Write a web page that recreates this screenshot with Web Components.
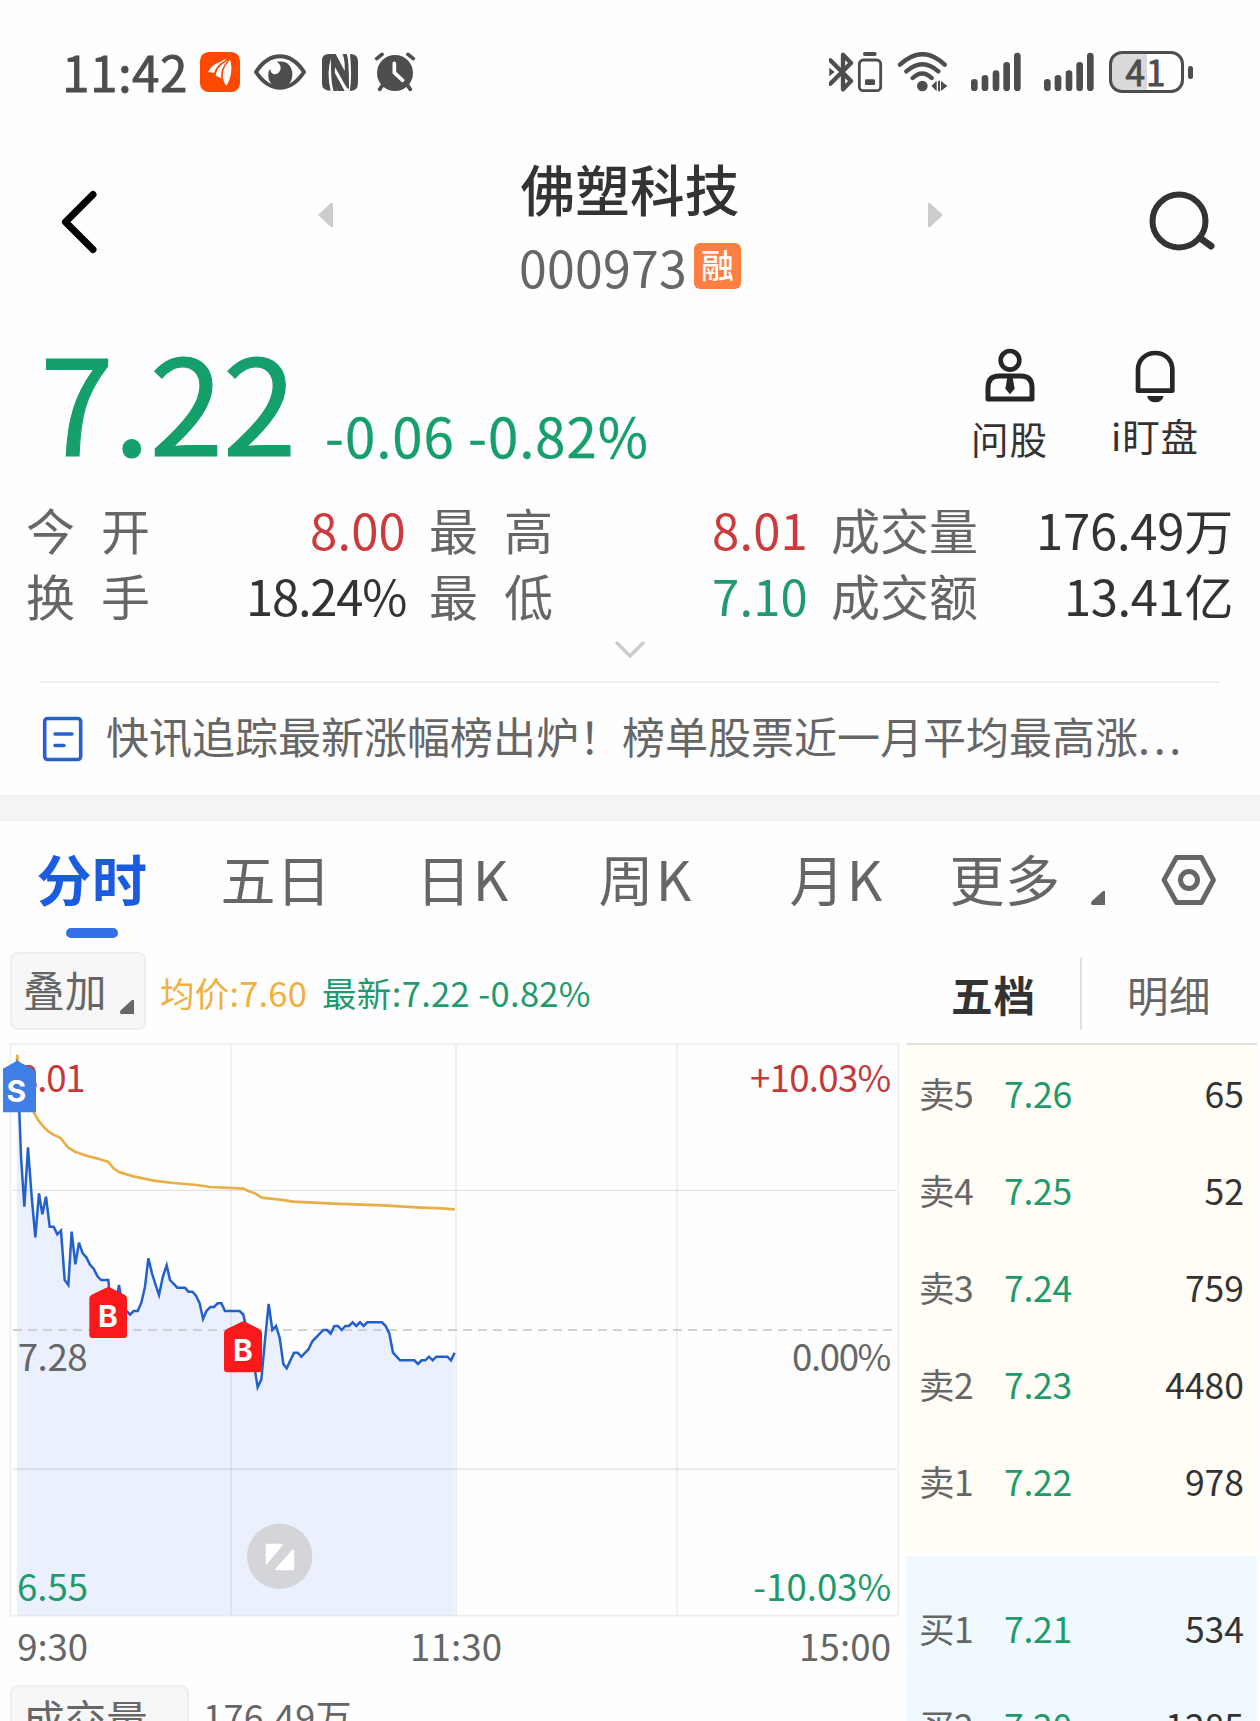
<!DOCTYPE html>
<html lang="zh-CN">
<head>
<meta charset="utf-8">
<meta name="viewport" content="width=1260">
<title>佛塑科技 000973</title>
<style>
  html, body {
    margin: 0;
    background: #fefefe;
  }
  body {
    width: 1260px;
    height: 1721px;
    overflow: hidden;
    font-family: "Noto Sans CJK SC", "Noto Sans", sans-serif;
    color: #333;
  }
</style>
</head>
<body>
<stock-page></stock-page>

<script>
const define = (name, html, setup) => {
  const template = document.createElement('template');
  template.innerHTML = html;
  customElements.define(name, class extends HTMLElement {
    constructor() {
      super();
      this.attachShadow({ mode: 'open' });
      this.shadowRoot.appendChild(template.content.cloneNode(true));
    }

    connectedCallback() {
      if (setup) setup(this, this.shadowRoot);
    }
  });
};

define('status-bar', `
  <style>
    :host { display: flex; align-items: center; height: 144px; box-sizing: border-box; padding: 0 67px 0 62px; color: #4d4d4d; }
    .time { font-size: 49.5px; -webkit-text-stroke: .8px #4d4d4d; margin-right: 12px; padding-bottom: 3px; }
    svg { display: block; flex: none; }
    .space { flex: 1; }
    .battery { display: flex; align-items: center; }
    .cell { width: 75px; height: 42px; box-sizing: border-box; border: 3px solid #4d4d4d; border-radius: 13px; display: flex; align-items: center; justify-content: center; background: linear-gradient(90deg, #d9d9d9 35px, transparent 35px); }
    .cell fit-text { font-size: 35px; -webkit-text-stroke: .9px #4d4d4d; padding: 0 1px 3px 0; }
    .nub { width: 5px; height: 13px; border-radius: 3px; background: #4d4d4d; margin-left: 4px; }
  </style>
  <fit-text class="time" w="126">11:42</fit-text>
  <svg width="40" height="40" viewBox="0 0 120 120">
    <rect width="120" height="120" rx="26" fill="#ff4800"/>
    <path fill="#fff" d="M24 61C29 46 42 37 59 30L74 22C78 20 77 26 73 29C60 36 47 46 43 64C36 61 30 60 24 61Z"/>
    <path fill="#fff" d="M47 72C49 52 59 40 76 29C82 23 83 27 80 32C70 45 62 61 66 82C60 76 54 72 47 72Z"/>
    <path fill="#fff" d="M69 82C64 60 72 43 83 31C88 24 91 22 92 29C97 50 94 79 79 101C75 98 73 91 69 82Z"/>
    <path d="M44 66C48 48 60 36 78 26M67 84C62 62 70 43 84 28" fill="none" stroke="#ff4800" stroke-width="4.500"/>
  </svg>
  <svg width="52" height="38" viewBox="0 0 156 114" style="margin-left:14px">
    <path d="M6 57C47-6 109-6 150 57C109 120 47 120 6 57Z" fill="none" stroke="#4d4d4d" stroke-width="12" stroke-linejoin="round"/>
    <path d="M68 27C99 20 116 40 115 66C114 89 99 105 79 105C58 105 41 88 43 64C43 57 45 52 49 48C49 64 67 69 75 58C84 45 80 33 68 27Z" fill="#4d4d4d"/>
  </svg>
  <svg width="36" height="37" viewBox="0 0 108 111" style="margin-left:16px">
    <path fill="#4d4d4d" d="M20 0H41L68 51Q70 23 62 0H74Q81 15 81 105Q75 104 71 96L39 39Q37 78 46 111H35Q26 88 27 13Q13 57 26 110Q0 109 0 89V20Q0 0 20 0ZM84 0Q108 0 108 22V87Q108 111 83 111Q91 70 84 0ZM39 58L68 111H47Q38 89 39 58Z"/>
  </svg>
  <svg width="42" height="40" viewBox="0 0 126 120" style="margin-left:16px">
    <path d="M8 20L24 7M102 7L118 20M27 98L17 112M99 98L109 112" stroke="#4d4d4d" stroke-width="11" stroke-linecap="round"/>
    <circle cx="63" cy="63" r="54" fill="#4d4d4d"/>
    <path d="M61 34V62L86 85" fill="none" stroke="#fefefe" stroke-width="11" stroke-linecap="round" stroke-linejoin="round"/>
  </svg>
  <span class="space"></span>
  <svg width="54" height="40" viewBox="0 0 162 120">
    <path d="M4 25L66 87L42 112V8L66 33L4 95" fill="none" stroke="#4d4d4d" stroke-width="13" stroke-linejoin="round" stroke-linecap="round"/>
    <path d="M1 47L17 60L1 73Z" fill="#4d4d4d"/>
    <rect x="91" y="24" width="64" height="92" rx="12" fill="none" stroke="#4d4d4d" stroke-width="8.500"/>
    <rect x="102" y="0" width="41" height="12" rx="6" fill="#4d4d4d"/>
    <rect x="108" y="82" width="30" height="17" rx="4" fill="#4d4d4d"/>
  </svg>
  <svg width="51" height="40" viewBox="0 0 153 120" style="margin-left:14px">
    <path d="M9 38Q77-25 143 38M28 58Q76 15 124 58M47 78Q76 51 104 78" fill="none" stroke="#4d4d4d" stroke-width="13" stroke-linecap="round"/>
    <circle cx="76" cy="102" r="16" fill="#4d4d4d"/>
    <path d="M103 102L119 86V118ZM123 86H129V118H123ZM132 87L151 102L132 117Z" fill="#4d4d4d"/>
  </svg>
  <svg width="50" height="40" viewBox="0 0 150 120" style="margin-left:23px">
    <path d="M10 91V107M42 79V107M75 65V107M107 40V107M139 12V107" stroke="#4d4d4d" stroke-width="20" stroke-linecap="round"/>
  </svg>
  <svg width="50" height="40" viewBox="0 0 150 120" style="margin-left:23px">
    <path d="M10 91V107M42 79V107M75 65V107M107 40V107M139 12V107" stroke="#4d4d4d" stroke-width="20" stroke-linecap="round"/>
  </svg>
  <div class="battery" style="margin-left:15px"><div class="cell"><fit-text w="41">41</fit-text></div><div class="nub"></div></div>
`);

define('stock-header', `
  <style>
    :host { display: flex; height: 166px; padding: 0 44px 0 58px; }
    svg { display: block; flex: none; }
    .title { width: 222px; display: flex; flex-direction: column; align-items: center; padding-top: 17px; }
    .name { font-size: 54.5px; font-weight: 500; }
    .code { display: flex; align-items: center; margin-top: 25px; color: #666; font-size: 50px; height: 50px; }
    .tag { width: 47px; height: 46px; margin-left: 7px; border-radius: 6px; background: #ff7f40; color: #fff; display: flex; align-items: center; justify-content: center; font-size: 33px; font-weight: 500; line-height: 1; }
    .tag span { padding-bottom: 2px; }
  </style>
  <svg width="40" height="70" viewBox="0 0 40 70" style="margin-top:43px"><path d="M35 7.500L7.500 35L35 62.500" fill="none" stroke="#000" stroke-width="7" stroke-linecap="round" stroke-linejoin="round"/></svg>
  <svg width="18" height="28" viewBox="0 0 18 28" style="margin:57px 185px 0 218px"><path d="M2 14L15 2Q17 1 17 3V25Q17 27 15 26Z" fill="#ccc"/></svg>
  <div class="title">
    <fit-text class="name" w="219">佛塑科技</fit-text>
    <div class="code"><fit-text w="168">000973</fit-text><div class="tag"><span>融</span></div></div>
  </div>
  <svg width="18" height="28" viewBox="0 0 18 28" style="margin:57px 0 0 186px"><path d="M16 14L3 2Q1 1 1 3V25Q1 27 3 26Z" fill="#ccc"/></svg>
  <svg width="72" height="70" viewBox="0 0 72 70" style="margin:42px 0 0 auto"><circle cx="35" cy="35" r="26.500" fill="none" stroke="#333" stroke-width="6"/><path d="M56 52L67 60" stroke="#333" stroke-width="7" stroke-linecap="round"/></svg>
`);

define('quote-action', `
  <style>
    :host { display: flex; flex-direction: column; align-items: center; color: #333; font-size: 37.5px; }
  </style>
  <slot></slot>
`);

define('quote-summary', `
  <style>
    :host { display: flex; height: 187px; color: #159f6a; }
    .price { font-size: 133px; -webkit-text-stroke: 1.2px #159f6a; margin: 22px 0 0 40px; }
    .change { font-size: 54.5px; margin: 98px 0 0 29px; -webkit-text-stroke: .3px #159f6a; }
    .space { flex: 1; }
    svg { display: block; }
  </style>
  <fit-text class="price" w="256">7.22</fit-text>
  <fit-text class="change" w="324">-0.06 -0.82%</fit-text>
  <span class="space"></span>
  <quote-action style="margin-top:38px">
    <svg width="52" height="56" viewBox="0 0 156 168">
      <circle cx="78" cy="37" r="28" fill="none" stroke="#262626" stroke-width="14"/>
      <path d="M12 153V119Q12 84 45 84H111Q144 84 144 119V153Z" fill="none" stroke="#262626" stroke-width="15" stroke-linejoin="round"/>
      <path d="M70 88H86L92 122L78 139L64 122Z" fill="#262626"/>
    </svg>
    <fit-text w="77" style="margin-top:15px">问股</fit-text>
  </quote-action>
  <quote-action style="margin:38px 61px 0 63px">
    <svg width="52" height="56" viewBox="0 0 156 168">
      <path d="M27 128V65C27 35 50 15 79 15S130 35 130 65V128Z" fill="none" stroke="#262626" stroke-width="14" stroke-linejoin="round"/>
      <path d="M54 144H104Q99 163 79 163T54 144Z" fill="#262626"/>
    </svg>
    <fit-text w="88" style="margin-top:12px">i盯盘</fit-text>
  </quote-action>
`);

define('quote-stats', `
  <style>
    :host { display: grid; grid-template-columns: 124px 279px 124px 278px 147px 256px; grid-auto-rows: 66px; align-items: center; height: 143px; padding: 0 26px; font-size: 49px; }
    .k { color: #666; display: flex; justify-content: space-between; line-height: 1; padding-bottom: 4px; }
    .v { justify-self: end; margin-right: 23px; padding-bottom: 4px; }
    .v.end { margin-right: 1px; }
    .red { color: #cc3a3d; }
    .green { color: #1f9a6c; }
  </style>
  <div class="k"><span>今</span><span>开</span></div><fit-text class="v red" w="96">8.00</fit-text>
  <div class="k"><span>最</span><span>高</span></div><fit-text class="v red" w="96">8.01</fit-text>
  <div class="k"><span>成</span><span>交</span><span>量</span></div><fit-text class="v end" w="197">176.49万</fit-text>
  <div class="k"><span>换</span><span>手</span></div><fit-text class="v" w="160">18.24%</fit-text>
  <div class="k"><span>最</span><span>低</span></div><fit-text class="v green" w="96">7.10</fit-text>
  <div class="k"><span>成</span><span>交</span><span>额</span></div><fit-text class="v end" w="169">13.41亿</fit-text>
`);

define('news-bar', `
  <style>
    :host { display: block; height: 155px; }
    .more { display: flex; justify-content: center; height: 41px; }
    svg { display: block; flex: none; }
    .line { height: 2px; margin: 0 40px; background: #f0f0f0; }
    .news { display: flex; align-items: center; padding: 0 0 1px 42px; height: 111px; color: #666; font-size: 43px; }
    fit-text { padding-bottom: 6px; }
  </style>
  <div class="more"><svg width="32" height="18" viewBox="0 0 32 18" style="margin-top:1px"><path d="M3 2L16 15L29 2" fill="none" stroke="#ccc" stroke-width="3.4" stroke-linecap="round"/></svg></div>
  <div class="line"></div>
  <div class="news">
    <svg width="42" height="46" viewBox="0 0 42 46"><rect x="2.700" y="2.500" width="36" height="41" rx="3" fill="none" stroke="#2860cc" stroke-width="3.600"/><path d="M13 18H30M13 29.500H22" stroke="#2860cc" stroke-width="3.400" stroke-linecap="round"/></svg>
    <fit-text w="1032" style="margin-left:22px">快讯追踪最新涨幅榜出炉！榜单股票近一月平均最高涨</fit-text>
    <fit-text w="47">...</fit-text>
  </div>
`);

define('period-tabs', `
  <style>
    :host { display: grid; grid-template-columns: 184px 184px 190px 176px 206px 130px 1fr 142px; height: 131px; color: #666; font-size: 55px; }
    div { display: flex; flex-direction: column; align-items: center; padding-top: 29px; }
    .on { color: #1a5ce0; font-weight: 700; }
    .on::after { content: ""; width: 52px; height: 10px; border-radius: 5px; background: #3370e6; margin-top: 23px; }
    svg { display: block; }
  </style>
  <div class="on"><fit-text w="111">分时</fit-text></div>
  <div><fit-text w="111">五日</fit-text></div>
  <div><fit-text w="94">日K</fit-text></div>
  <div><fit-text w="95">周K</fit-text></div>
  <div><fit-text w="95">月K</fit-text></div>
  <div><fit-text w="111">更多</fit-text></div>
  <div style="align-items:flex-start;padding:70px 0 0 21px"><svg width="14" height="14"><path d="M0 13Q0 11 1 10L12 0H14V14H1Z" fill="#666"/></svg></div>
  <div style="padding-top:33px"><svg width="56" height="52" viewBox="0 0 56 52"><path d="M15.500 3.500H40.500L52.500 26L40.500 48.500H15.500L3 26Z" fill="none" stroke="#666" stroke-width="4.800" stroke-linejoin="round"/><circle cx="28" cy="26" r="8.500" fill="none" stroke="#666" stroke-width="5"/></svg></div>
`);

define('tool-chip', `
  <style>
    :host { display: block; position: relative; box-sizing: border-box; height: 78px; border: 2px solid #eee; border-radius: 8px; background: #f7f7f7; color: #666; font-size: 41.5px; padding: 15px 0 0 11px; flex: none; }
    svg { position: absolute; right: 10px; bottom: 14px; }
    :host([plain]) { padding-top: 11px; }
    :host([plain]) svg { display: none; }
  </style>
  <slot></slot>
  <svg width="14" height="14"><path d="M0 13Q0 11 1 10L12 0H14V14H1Z" fill="#666"/></svg>
`);

define('chart-toolbar', `
  <style>
    :host { display: flex; height: 91px; font-size: 34.5px; }
    .avg { color: #f0b040; margin: 23px 0 0 14px; }
    .last { color: #1f9a6c; margin: 23px 0 0 15px; }
    .side { margin-left: auto; display: flex; width: 354px; font-size: 41.5px; color: #666; }
    .side > * { flex: none; }
    .side b { color: #333; }
    .bar { width: 2px; height: 72px; margin-top: 6px; background: #e0e0e0; }
  </style>
  <tool-chip style="width:136px;margin-left:10px"><fit-text w="84">叠加</fit-text></tool-chip>
  <fit-text class="avg" w="147">均价:7.60</fit-text>
  <fit-text class="last" w="269">最新:7.22 -0.82%</fit-text>
  <div class="side">
    <b><fit-text w="85" style="margin:22px 0 0 45px">五档</fit-text></b>
    <div class="bar" style="margin-left:44px"></div>
    <fit-text w="84" style="margin:22px 0 0 45px">明细</fit-text>
  </div>
`);

// plot coordinates: 3 units per css pixel, origin at the top left of the host
const PRICE = '51,55 58,215 63,350 73,500 84,322 95,470 106,592 117,460 127,523 138,470 149,560 161,560 172,583 183,572 194,720 205,735 215,575 226,673 237,608 248,640 259,652 270,674 281,686 292,708 303,720 325,720 328,750 346,800 357,735 368,800 380,813 390,824 401,813 413,813 424,788 435,740 445,655 456,700 467,735 477,765 489,708 500,676 510,720 532,743 555,743 565,755 577,755 588,767 599,790 609,837 620,812 631,801 642,801 653,790 664,790 675,813 719,813 730,824 736,850 760,960 773,1042 784,1018 795,900 806,792 817,870 828,858 839,893 850,972 860,985 882,938 893,938 904,950 926,927 937,904 970,870 981,870 992,881 1003,858 1014,858 1025,870 1036,858 1047,858 1058,847 1069,858 1080,847 1091,858 1102,847 1146,847 1157,858 1168,881 1179,938 1200,961 1243,961 1254,972 1265,961 1276,961 1287,950 1298,961 1309,950 1342,950 1353,961 1364,938';
const AVERAGE = '51,44 58,90 80,170 104,222 118,245 130,260 145,274 160,284 182,294 192,307 205,323 225,335 262,348 290,355 325,366 340,384 357,396 400,409 460,422 520,429 590,435 630,441 730,446 745,453 765,460 785,473 840,479 880,485 1000,491 1150,496 1250,502 1325,505 1364,508';

define('intraday-chart', `
  <style>
    :host { display: block; width: 906px; height: 645px; }
    svg { display: block; font-size: 110px; }
    .mark { font-family: Inter, "Noto Sans CJK SC", sans-serif; font-size: 90px; font-weight: 700; text-anchor: middle; fill: #fff; }
  </style>
  <svg width="906" height="645" viewBox="0 0 2718 1935">
    <polygon points="51,1726 ${PRICE} 1364,1726" fill="#eaf0fe"/>
    <g fill="none" stroke="#000" stroke-opacity=".065" stroke-width="5">
      <rect x="31" y="12" width="2664" height="1715"/>
      <path d="M693 14V1726M1368 14V1726M2031 14V1726"/>
      <path d="M39 451H2690M39 1287H2690" stroke-width="4" stroke-opacity=".1"/>
    </g>
    <path d="M39 870H2690" stroke="#c4c4c8" stroke-width="5" stroke-dasharray="27 18"/>
    <g fill="#c23a3c">
      <text x="54" y="155" textLength="203">8.01</text>
      <text x="2250" y="155" textLength="424">+10.03%</text>
    </g>
    <g fill="#666">
      <text x="53" y="992" textLength="210">7.28</text>
      <text x="2376" y="992" textLength="298">0.00%</text>
      <text x="52" y="1863" textLength="212">9:30</text>
      <text x="1230" y="1863" textLength="276">11:30</text>
      <text x="2397" y="1863" textLength="276">15:00</text>
    </g>
    <g fill="#1f9a6c">
      <text x="51" y="1682" textLength="213">6.55</text>
      <text x="2260" y="1682" textLength="414">-10.03%</text>
    </g>
    <polyline points="${PRICE}" fill="none" stroke="#2460cc" stroke-width="7.500" stroke-linejoin="miter"/>
    <polyline points="${AVERAGE}" fill="none" stroke="#eaae48" stroke-width="8"/>
    <path d="M51 62L98 87Q108 92 108 100V217H9V86Z" fill="#3f7ee5"/>
    <path d="M325 740L371 763Q381 768 381 776V884Q381 894 371 894H278Q268 894 268 884V776Q268 768 278 763Z" fill="#fa1a1c"/>
    <path d="M730 843L776 866Q786 871 786 879V987Q786 997 776 997H682Q672 997 672 987V879Q672 871 682 866Z" fill="#fa1a1c"/>
    <text class="mark" x="49" y="185">S</text>
    <text class="mark" x="324" y="860">B</text>
    <text class="mark" x="729" y="963">B</text>
    <circle cx="839" cy="1549" r="98" fill="#d3d5d9"/>
    <path d="M800 1514H846L800 1570ZM880 1530V1588H828Z" fill="#fff" stroke="#fff" stroke-width="5" stroke-linejoin="round"/>
  </svg>
`);

define('volume-head', `
  <style>
    :host { display: flex; height: 60px; color: #666; font-size: 36px; }
    .v { margin: 12px 0 0 14px; }
  </style>
  <tool-chip plain style="width:179px;margin-left:10px"><fit-text w="125">成交量</fit-text></tool-chip>
  <fit-text class="v" w="149">176.49万</fit-text>
`);

define('book-row', `
  <style>
    :host { display: grid; grid-template-columns: 85px 80px 1fr; align-items: center; height: 97px; font-size: 35.5px; line-height: 1; padding: 0 13px 0 13px; box-sizing: border-box; }
    span { padding-bottom: 2px; }
    .k { color: #666; }
    .p { color: #1f9a6c; }
    .q { text-align: right; }
  </style>
  <span class="k"></span><span class="p"></span><span class="q"></span>
`, (host, root) => {
  root.querySelector('.k').innerHTML = `<fit-text w="54">${host.getAttribute('label')}</fit-text>`;
  root.querySelector('.p').innerHTML = `<fit-text w="68">${host.getAttribute('price')}</fit-text>`;
  root.querySelector('.q').textContent = host.getAttribute('amount');
});

define('order-book', `
  <style>
    :host { display: block; width: 351px; height: 678px; overflow: hidden; box-sizing: border-box; border-top: 2px solid #e0e0e0; }
    .sell { background: #fffdf5; height: 508px; }
    .buy { background: #f0f9fd; margin-top: 3px; padding-top: 24px; height: 200px; }
  </style>
  <div class="sell">
    <book-row label="卖5" price="7.26" amount="65"></book-row>
    <book-row label="卖4" price="7.25" amount="52"></book-row>
    <book-row label="卖3" price="7.24" amount="759"></book-row>
    <book-row label="卖2" price="7.23" amount="4480"></book-row>
    <book-row label="卖1" price="7.22" amount="978"></book-row>
  </div>
  <div class="buy">
    <book-row label="买1" price="7.21" amount="534"></book-row>
    <book-row label="买2" price="7.20" amount="1285"></book-row>
  </div>
`);

define('stock-page', `
  <style>
    :host { display: block; }
    .band { height: 26px; background: #f4f4f4; }
    .body { display: flex; margin-top: -3px; }
  </style>
  <status-bar></status-bar>
  <stock-header></stock-header>
  <quote-summary></quote-summary>
  <quote-stats></quote-stats>
  <news-bar></news-bar>
  <div class="band"></div>
  <period-tabs></period-tabs>
  <chart-toolbar></chart-toolbar>
  <div class="body">
    <div>
      <intraday-chart></intraday-chart>
      <volume-head></volume-head>
    </div>
    <order-book style="margin-top:3px"></order-book>
  </div>
`);

// spreads its letters so that the text fills exactly w pixels;
// defined last, when the font sizes of all the parents are settled
define('fit-text', `
  <style>
    :host { display: block; line-height: 1; white-space: nowrap; flex: none; }
    span { display: inline-block; }
  </style>
  <span><slot></slot></span>
`, (host, root) => {
  const w = Number(host.getAttribute('w'));
  const natural = root.querySelector('span').getBoundingClientRect().width;
  host.style.letterSpacing = `${(w - natural) / host.textContent.length}px`;
  host.style.width = `${w}px`;
});
</script>
</body>
</html>
